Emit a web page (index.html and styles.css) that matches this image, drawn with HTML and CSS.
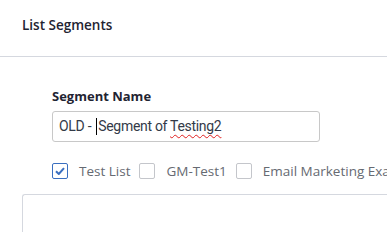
FILE: index.html
```html
<!DOCTYPE html>
<html lang="en">
<head>
    <meta charset="UTF-8">
    <title>List Segments</title>
    <link rel="stylesheet" href="styles.css">
</head>
<body>

    <header class="header">
        <h1>List Segments</h1>
    </header>

    <main class="content">
        <div class="field">
            <label class="field-label">Segment Name</label>
            <div class="text-input">OLD -<span class="caret"></span>Segment of <span class="misspelled">Testing2</span></div>
        </div>

        <div class="lists">
            <label class="check">
                <span class="box checked">
                    <svg width="10" height="8" viewBox="0 0 10 8"><path d="M1 4.2 L3.8 7 L9 1.2" fill="none" stroke="#3a6fc0" stroke-width="2"/></svg>
                </span>
                Test List
            </label>
            <label class="check"><span class="box"></span>GM-Test1</label>
            <label class="check"><span class="box"></span>Email Marketing Exa</label>
        </div>
    </main>

    <div class="panel"></div>

</body>
</html>
```

FILE: styles.css
```css
html, body {
    margin: 0;
    height: 100%;
    overflow: hidden;
}

body {
    font-family: "Open Sans", Arial, sans-serif;
    background-color: #ffffff;
    color: #1f2432;
}

.header {
    height: 56px;
    border-bottom: 1px solid #d5d8df;
    padding: 0 22px;
    display: flex;
    align-items: center;
}

.header h1 {
    font-size: 13.5px;
    font-weight: 600;
    margin: 0 0 6px;
}

.content {
    padding: 30px 0 0 52px;
}

.field-label {
    display: block;
    font-size: 13px;
    font-weight: 700;
    margin-bottom: 6px;
}

.text-input {
    width: 254px;
    height: 29px;
    line-height: 29px;
    border: 1px solid #c8c8c8;
    border-radius: 3px;
    padding: 0 6px;
    font-family: Roboto, "Open Sans", sans-serif;
    font-size: 14px;
    letter-spacing: -0.3px;
    color: #333a48;
    white-space: nowrap;
}

.caret {
    display: inline-block;
    width: 1px;
    height: 17px;
    background-color: #000;
    vertical-align: middle;
    margin: -2px 1px 0 5px;
}

.misspelled {
    text-decoration: underline wavy #e02020;
    text-decoration-thickness: 1px;
    text-underline-offset: 3px;
}

.lists {
    display: flex;
    margin-top: 20px;
    white-space: nowrap;
}

.check {
    display: flex;
    align-items: center;
    font-size: 13.5px;
    color: #666a72;
    margin-right: 9px;
}

.box {
    width: 14px;
    height: 14px;
    border: 1px solid #c4c6cb;
    border-radius: 2px;
    margin-right: 11px;
    display: flex;
    align-items: center;
    justify-content: center;
}

.box.checked {
    border-color: #3a6fc0;
}

.panel {
    margin: 14px 0 0 22px;
    height: 60px;
    border: 1px solid #d5d8df;
    border-right: none;
    border-bottom: none;
    border-top-left-radius: 3px;
}
```
